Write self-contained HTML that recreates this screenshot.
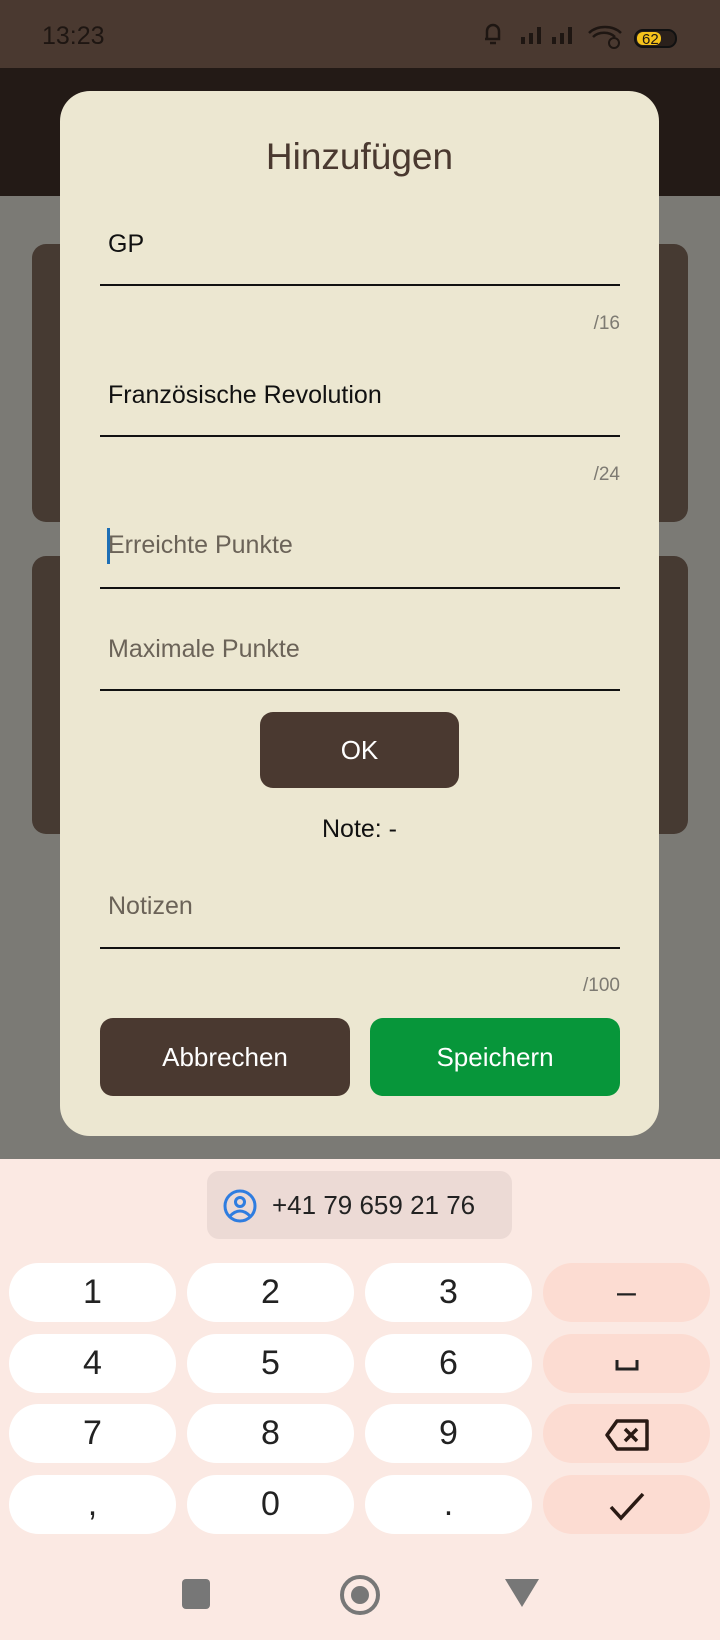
<!DOCTYPE html>
<html><head><meta charset="utf-8"><style>
*{margin:0;padding:0;box-sizing:border-box}
body{width:720px;height:1640px;position:relative;overflow:hidden;font-family:"Liberation Sans",sans-serif;background:#7b7a75}
.a{position:absolute}
.line{position:absolute;left:100px;width:520px;height:2px;background:#111}
.lbl{position:absolute;left:108px;font-size:25px;color:#111}
.ph{color:#6b6358}
.cnt{position:absolute;right:100px;font-size:19px;color:#7d7a72}
.key{position:absolute;width:167px;height:59px;border-radius:30px;background:#fff;text-align:center;line-height:59px;font-size:34px;color:#222}
.k2{background:#fcdcd2}
</style></head><body>
<div class="a" style="left:0;top:0;width:720px;height:68px;background:#4a3930"></div>
<div class="a" style="left:42px;top:22px;font-size:25px;color:#1e1612">13:23</div>
<svg class="a" style="left:480px;top:20px" width="200" height="32" viewBox="0 0 200 32">
<path d="M7 19 V11 a6 6 0 0 1 12 0 V19 H5 M10 23 h6" stroke="#1e1612" stroke-width="2.5" fill="none"/>
<rect x="41" y="17" width="4" height="7" fill="#1e1612"/><rect x="49" y="13" width="4" height="11" fill="#1e1612"/><rect x="57" y="7" width="4" height="17" fill="#1e1612"/>
<rect x="72" y="17" width="4" height="7" fill="#1e1612"/><rect x="80" y="13" width="4" height="11" fill="#1e1612"/><rect x="88" y="7" width="4" height="17" fill="#1e1612"/>
<path d="M109 13 a20 15 0 0 1 32 0 M113 17 a14 11 0 0 1 22 0" stroke="#1e1612" stroke-width="2.5" fill="none"/>
<circle cx="134" cy="23" r="5" stroke="#1e1612" stroke-width="2" fill="none"/>
<rect x="155" y="10" width="41" height="17" rx="8" fill="#2a201b" stroke="#111" stroke-width="2"/>
<rect x="157" y="12" width="24" height="13" rx="6" fill="#f5c31c"/>
<text x="162" y="24" font-size="15" fill="#1e1612" font-family="Liberation Sans">62</text>
</svg>
<div class="a" style="left:0;top:68px;width:720px;height:128px;background:#231a16"></div>
<div class="a" style="left:32px;top:244px;width:656px;height:278px;background:#463a32;border-radius:14px"></div>
<div class="a" style="left:32px;top:556px;width:656px;height:278px;background:#463a32;border-radius:14px"></div>

<div class="a" style="left:60px;top:91px;width:599px;height:1045px;background:#ece7d1;border-radius:30px"></div>
<div class="a" style="left:60px;width:599px;top:136px;text-align:center;font-size:37px;color:#4a3930">Hinzufügen</div>
<div class="lbl" style="top:230px">GP</div>
<div class="line" style="top:284px"></div>
<div class="cnt" style="top:313px">/16</div>
<div class="lbl" style="top:381px">Französische Revolution</div>
<div class="line" style="top:435px"></div>
<div class="cnt" style="top:464px">/24</div>
<div class="a" style="left:107px;top:528px;width:3px;height:36px;background:#1e6fb5"></div>
<div class="lbl ph" style="top:531px">Erreichte Punkte</div>
<div class="line" style="top:587px"></div>
<div class="lbl ph" style="top:635px">Maximale Punkte</div>
<div class="line" style="top:689px"></div>
<div class="a" style="left:260px;top:712px;width:199px;height:76px;background:#4a3930;border-radius:13px;color:#fff;font-size:26px;text-align:center;line-height:76px">OK</div>
<div class="a" style="left:60px;width:599px;top:815px;text-align:center;font-size:25px;color:#111">Note: -</div>
<div class="lbl ph" style="top:892px">Notizen</div>
<div class="line" style="top:947px"></div>
<div class="cnt" style="top:975px">/100</div>
<div class="a" style="left:100px;top:1018px;width:250px;height:78px;background:#4a3930;border-radius:13px;color:#fff;font-size:26px;text-align:center;line-height:78px">Abbrechen</div>
<div class="a" style="left:370px;top:1018px;width:250px;height:78px;background:#07963a;border-radius:13px;color:#fff;font-size:26px;text-align:center;line-height:78px">Speichern</div>

<div class="a" style="left:0;top:1159px;width:720px;height:481px;background:#fbe9e3"></div>
<div class="a" style="left:207px;top:1171px;width:305px;height:68px;background:#ecdad5;border-radius:12px"></div>
<svg class="a" style="left:222px;top:1188px" width="36" height="36" viewBox="0 0 36 36"><circle cx="18" cy="18" r="15" stroke="#2f7de0" stroke-width="3" fill="none"/><circle cx="18" cy="14" r="4.5" stroke="#2f7de0" stroke-width="3" fill="none"/><path d="M8 28 q10 -10 20 0" stroke="#2f7de0" stroke-width="3" fill="none"/></svg>
<div class="a" style="left:272px;top:1190px;font-size:26px;color:#222">+41 79 659 21 76</div>

<div class="key" style="left:9px;top:1263px">1</div><div class="key" style="left:187px;top:1263px">2</div><div class="key" style="left:365px;top:1263px">3</div><div class="key k2" style="left:543px;top:1263px">–</div>
<div class="key" style="left:9px;top:1334px">4</div><div class="key" style="left:187px;top:1334px">5</div><div class="key" style="left:365px;top:1334px">6</div><div class="key k2" style="left:543px;top:1334px"><svg width="30" height="20" viewBox="0 0 30 20" style="vertical-align:middle"><path d="M5 5 v9 h20 v-9" stroke="#222" stroke-width="3" fill="none"/></svg></div>
<div class="key" style="left:9px;top:1404px">7</div><div class="key" style="left:187px;top:1404px">8</div><div class="key" style="left:365px;top:1404px">9</div><div class="key k2" style="left:543px;top:1404px"><svg width="48" height="34" viewBox="0 0 48 34" style="vertical-align:middle"><path d="M14 3 H44 V31 H14 L4 17 Z" stroke="#2a1a14" stroke-width="3.5" fill="none" stroke-linejoin="round"/><path d="M22 11 l12 12 M34 11 l-12 12" stroke="#2a1a14" stroke-width="3.5"/></svg></div>
<div class="key" style="left:9px;top:1475px">,</div><div class="key" style="left:187px;top:1475px">0</div><div class="key" style="left:365px;top:1475px">.</div><div class="key k2" style="left:543px;top:1475px"><svg width="40" height="34" viewBox="0 0 40 34" style="vertical-align:middle"><path d="M4 18 l10 11 l22 -24" stroke="#2a1a14" stroke-width="3.5" fill="none"/></svg></div>

<div class="a" style="left:182px;top:1579px;width:28px;height:30px;background:#777;border-radius:4px"></div>
<div class="a" style="left:340px;top:1575px;width:40px;height:40px;border:4px solid #777;border-radius:50%"></div>
<div class="a" style="left:351px;top:1586px;width:18px;height:18px;background:#777;border-radius:50%"></div>
<svg class="a" style="left:505px;top:1579px" width="34" height="30" viewBox="0 0 34 30"><path d="M0 0 H34 L17 28 Z" fill="#777"/></svg>
</body></html>
